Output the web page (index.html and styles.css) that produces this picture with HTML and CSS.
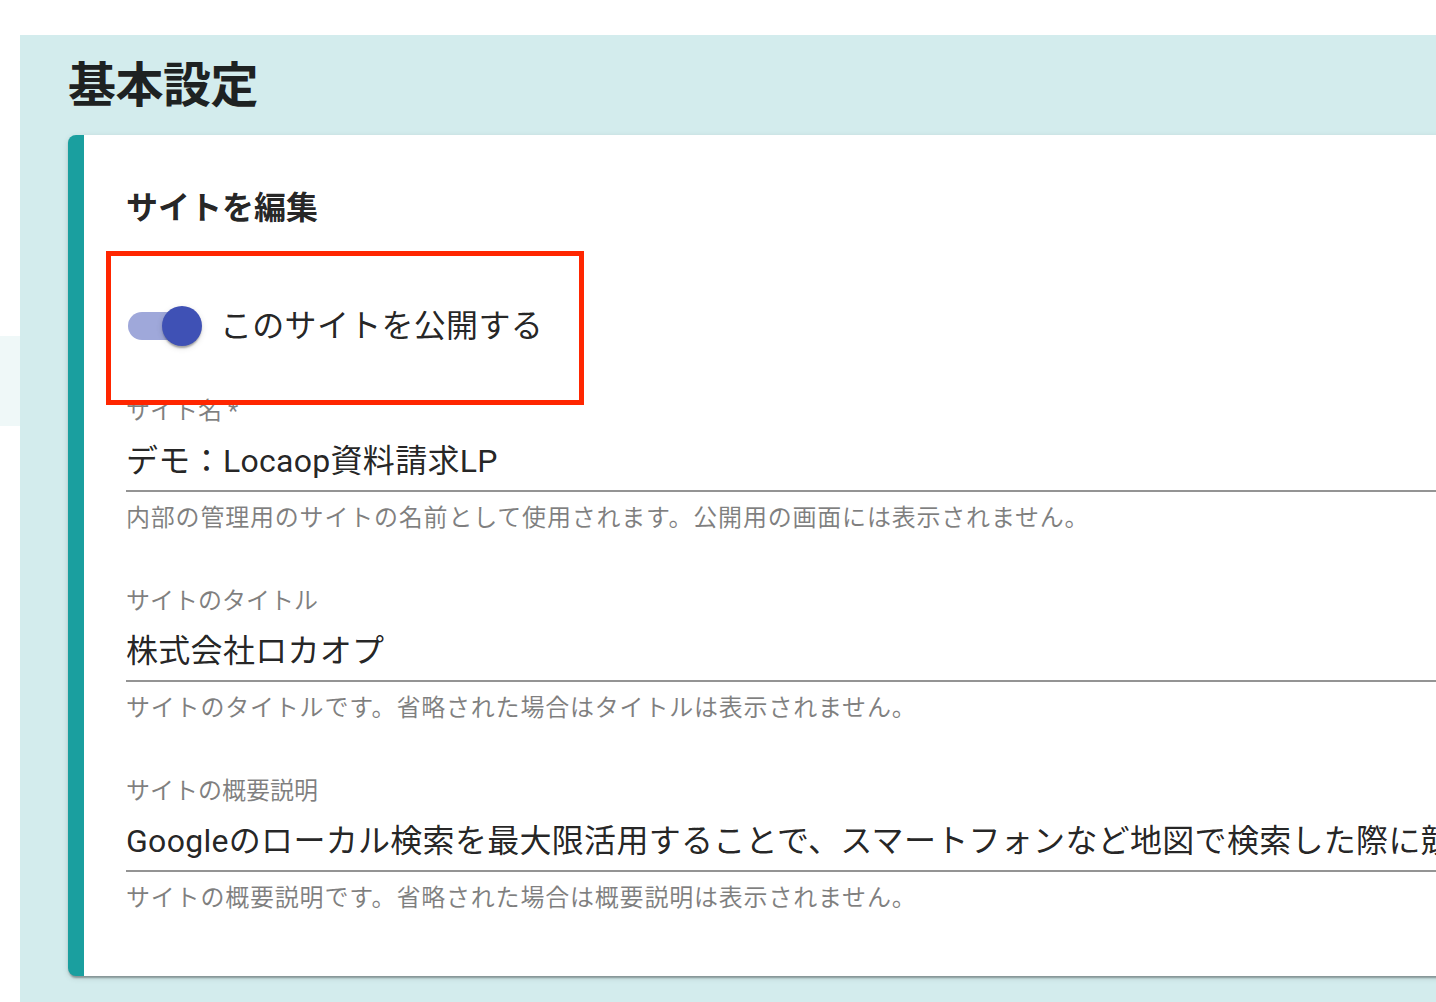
FILE: index.html
```html
<!DOCTYPE html>
<html lang="ja">
<head>
<meta charset="utf-8">
<title>基本設定</title>
<link rel="stylesheet" href="styles.css">
</head>
<body>
<div class="app">
  <aside class="rail">
    <div class="rail-item"></div>
  </aside>
  <main class="panel">
    <h1 class="page-title">基本設定</h1>
    <section class="card">
      <h2 class="card-title">サイトを編集</h2>
      <div class="switch-row">
        <label class="switch-label">
          <span class="switch">
            <span class="switch-track"></span>
            <span class="switch-thumb"></span>
          </span>
          <span class="switch-text">このサイトを公開する</span>
        </label>
      </div>

      <div class="field">
        <div class="field-label">サイト名 *</div>
        <div class="field-input">デモ：Locaop資料請求LP</div>
        <p class="field-help">内部の管理用のサイトの名前として使用されます。公開用の画面には表示されません。</p>
      </div>

      <div class="field">
        <div class="field-label">サイトのタイトル</div>
        <div class="field-input">株式会社ロカオプ</div>
        <p class="field-help">サイトのタイトルです。省略された場合はタイトルは表示されません。</p>
      </div>

      <div class="field">
        <div class="field-label">サイトの概要説明</div>
        <div class="field-input">Googleのローカル検索を最大限活用することで、スマートフォンなど地図で検索した際に競合よりも上位に表示されます。</div>
        <p class="field-help">サイトの概要説明です。省略された場合は概要説明は表示されません。</p>
      </div>

      <div class="highlight"></div>
    </section>
  </main>
</div>
</body>
</html>
```

FILE: styles.css
```css
* {
  box-sizing: border-box;
}

html, body {
  margin: 0;
  padding: 0;
  background: #ffffff;
  overflow: hidden;
}

body {
  font-family: Roboto, "Noto Sans CJK JP", sans-serif;
  color: rgba(0, 0, 0, 0.87);
  width: 1436px;
  height: 1002px;
}

.app {
  display: flex;
  padding-top: 35px;
  height: 1002px;
}

.rail {
  width: 20px;
  flex: none;
}

.rail-item {
  margin-top: 301px;
  height: 90px;
  background: #eff8f8;
}

.panel {
  flex: 1;
  min-width: 0;
  background: #d3eced;
  overflow: hidden;
  padding: 22px 0 0 48px;
}

.page-title {
  margin: 0 0 20px 0;
  font-size: 48px;
  line-height: 58px;
  font-weight: 700;
  color: #1e2222;
  letter-spacing: -0.5px;
}

.card {
  position: relative;
  width: 1500px;
  background: #ffffff;
  border-left: 16px solid #1a9f9f;
  border-radius: 8px 0 0 8px;
  box-shadow: 0 4px 2px -2px rgba(0, 0, 0, 0.2), 0 2px 2px 0 rgba(0, 0, 0, 0.14), 0 2px 6px 0 rgba(0, 0, 0, 0.12);
  padding: 49px 0 42px 42px;
  display: flex;
  flex-direction: column;
  align-items: stretch;
}

.card-title {
  margin: 0;
  font-size: 32px;
  line-height: 48px;
  font-weight: 700;
  color: rgba(0, 0, 0, 0.87);
}

.switch-row {
  margin-top: 56px;
  height: 76px;
}

.switch-label {
  display: inline-flex;
  align-items: center;
  margin-left: -22px;
}

.switch {
  position: relative;
  width: 116px;
  height: 76px;
  flex: none;
}

.switch-track {
  position: absolute;
  left: 24px;
  top: 24px;
  width: 68px;
  height: 28px;
  border-radius: 14px;
  background: #9fa8da;
}

.switch-thumb {
  position: absolute;
  left: 58px;
  top: 18px;
  width: 40px;
  height: 40px;
  border-radius: 50%;
  background: #3f51b5;
  box-shadow: 0 4px 2px -2px rgba(0, 0, 0, 0.2), 0 2px 2px 0 rgba(0, 0, 0, 0.14), 0 2px 6px 0 rgba(0, 0, 0, 0.12);
}

.switch-text {
  font-size: 32px;
  line-height: 48px;
  letter-spacing: 0.3px;
  color: rgba(0, 0, 0, 0.87);
}

.field {
  margin: 32px 0 16px 0;
  display: flex;
  flex-direction: column;
}

.field-label {
  height: 32px;
  margin-top: -2px;
  margin-bottom: 2px;
  font-size: 24px;
  line-height: 34.5px;
  color: rgba(0, 0, 0, 0.5);
  white-space: nowrap;
}

.field-input {
  height: 64px;
  padding: 10px 0 6px 0;
  font-size: 32px;
  line-height: 46px;
  letter-spacing: 0.3px;
  color: rgba(0, 0, 0, 0.87);
  border-bottom: 2px solid rgba(0, 0, 0, 0.42);
  white-space: nowrap;
  overflow: hidden;
}

.field-help {
  margin: 6px 0 0 0;
  font-size: 24px;
  line-height: 40px;
  letter-spacing: 0.8px;
  color: rgba(0, 0, 0, 0.5);
  white-space: nowrap;
}

.highlight {
  position: absolute;
  left: 22px;
  top: 116px;
  width: 478px;
  height: 154px;
  border: 5px solid #ff2600;
  pointer-events: none;
}
```
